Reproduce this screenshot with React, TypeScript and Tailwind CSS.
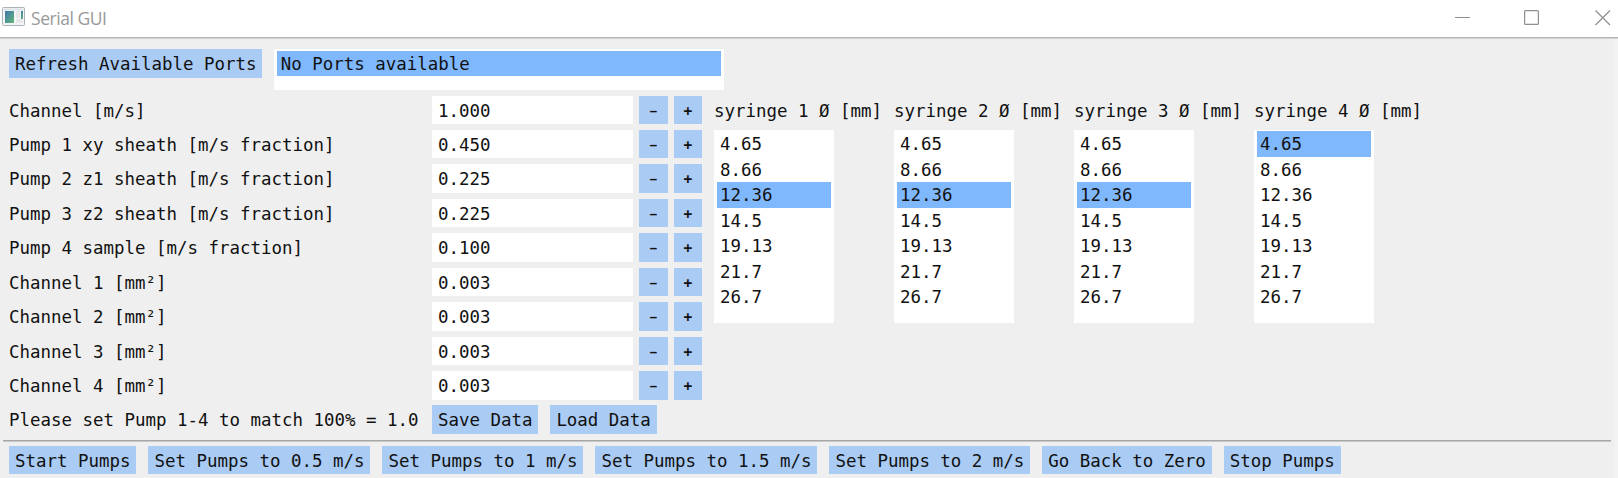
import React from "react";

const params: [string, string][] = [
  ["Channel [m/s]", "1.000"],
  ["Pump 1 xy sheath [m/s fraction]", "0.450"],
  ["Pump 2 z1 sheath [m/s fraction]", "0.225"],
  ["Pump 3 z2 sheath [m/s fraction]", "0.225"],
  ["Pump 4 sample [m/s fraction]", "0.100"],
  ["Channel 1 [mm²]", "0.003"],
  ["Channel 2 [mm²]", "0.003"],
  ["Channel 3 [mm²]", "0.003"],
  ["Channel 4 [mm²]", "0.003"],
];

const diameters = ["4.65", "8.66", "12.36", "14.5", "19.13", "21.7", "26.7"];
const selected = ["12.36", "12.36", "12.36", "4.65"];

const actions = [
  "Start Pumps",
  "Set Pumps to 0.5 m/s",
  "Set Pumps to 1 m/s",
  "Set Pumps to 1.5 m/s",
  "Set Pumps to 2 m/s",
  "Go Back to Zero",
  "Stop Pumps",
];

function Button({ children }: { children: React.ReactNode }) {
  return (
    <button className="flex h-[28.5px] shrink-0 items-start bg-[#aacbf4] px-[6px] leading-[31px] whitespace-pre">
      {children}
    </button>
  );
}

function Step({ children }: { children: string }) {
  return (
    <button className="flex h-[28.5px] w-[28.5px] shrink-0 items-start justify-center bg-[#aacbf4]">
      <span
        className={
          children === "-"
            ? "scale-x-150 text-[17.44px] leading-[28px]"
            : "text-[14.5px] leading-[30px] font-bold"
        }
      >
        {children}
      </span>
    </button>
  );
}

function TitleBar() {
  return (
    <header className="flex h-[37px] shrink-0 items-start bg-white">
      <svg className="mt-[7px] ml-[2px] shrink-0" width="23" height="19" viewBox="0 0 23 19">
        <defs>
          <linearGradient id="pane" x1="0" y1="0" x2="1" y2="1">
            <stop offset="0" stopColor="#3f76ad" />
            <stop offset="1" stopColor="#62b877" />
          </linearGradient>
        </defs>
        <rect x="0.5" y="0.5" width="22" height="18" rx="1" fill="#f4f6f7" stroke="#aab2b8" />
        <rect x="1.5" y="1.5" width="20" height="2" fill="#dfe4e8" />
        <rect x="3" y="4" width="9" height="12" fill="url(#pane)" />
        <rect x="14" y="4" width="4" height="7" fill="#e6e8ea" />
        <rect x="19" y="4" width="2" height="8" fill="url(#pane)" />
        <rect x="14" y="12" width="7" height="4" fill="#e6e8ea" />
      </svg>
      <span className="ml-[6px] font-['Open_Sans',sans-serif] text-[17.5px] leading-[37px] tracking-[-0.45px] text-[#999999]">
        Serial GUI
      </span>
      <svg className="mt-[9px] ml-auto mr-[6px] shrink-0" width="157" height="17" viewBox="0 0 157 17" fill="none" stroke="#8f8f8f">
        <path d="M0 8.5H15" />
        <rect x="69.6" y="1.6" width="13.8" height="13.8" rx="1" strokeWidth="1.2" />
        <path d="M140.5 1.5L155 16M155 1.5L140.5 16" strokeWidth="1.2" />
      </svg>
    </header>
  );
}

export default function App() {
  return (
    <div className="flex h-[478px] w-[1618px] flex-col overflow-hidden bg-[#efefef] font-['DejaVu_Sans_Mono',monospace] text-[17.44px] text-[#111111]">
      <TitleBar />
      <div className="h-[2px] shrink-0 border-t border-[#b4b4b4] bg-[#d2d2d2]" />
      <main className="flex h-[439px] shrink-0 flex-col border-r-4 border-[#f3f3f3] pt-[10px] pl-[9px]">
        <div className="flex h-[46.5px] shrink-0 items-start gap-[11.9px]">
          <Button>Refresh Available Ports</Button>
          <div className="h-[40.5px] w-[450px] bg-white px-[3px] pt-[1.5px]">
            <div className="h-[25.5px] bg-[#80b8fd] pl-[3.5px] leading-[26px]">No Ports available</div>
          </div>
        </div>
        <div className="flex shrink-0 gap-[12px]">
          <div className="flex w-[693px] flex-col">
            {params.map(([label, value]) => (
              <div key={label} className="flex h-[34.45px] items-start gap-[6px]">
                <span className="w-[417px] leading-[31px] whitespace-pre">{label}</span>
                <div className="h-[28.5px] w-[201px] bg-white pl-[6px] leading-[31px]">{value}</div>
                <Step>-</Step>
                <Step>+</Step>
              </div>
            ))}
            <div className="flex h-[34.4px] items-start">
              <span className="w-[423px] leading-[31px] whitespace-pre">
                Please set Pump 1-4 to match 100% = 1.0
              </span>
              <div className="flex gap-[11.9px]">
                <Button>Save Data</Button>
                <Button>Load Data</Button>
              </div>
            </div>
          </div>
          <div className="flex">
            {selected.map((current, i) => (
              <div key={i} className="w-[180px]">
                <div className="h-[34.5px] leading-[31px] whitespace-pre">{`syringe ${i + 1} Ø [mm]`}</div>
                <div className="h-[193px] w-[120px] bg-white px-[3px] pt-[1.2px]">
                  {diameters.map((d) => (
                    <div
                      key={d}
                      className={
                        d === current
                          ? "h-[25.5px] bg-[#80b8fd] pl-[3px] leading-[27.5px]"
                          : "h-[25.5px] pl-[3px] leading-[27.5px]"
                      }
                    >
                      {d}
                    </div>
                  ))}
                </div>
              </div>
            ))}
          </div>
        </div>
        <div className="mt-[0.5px] -ml-[6px] h-[2px] w-[1608px] shrink-0 border-t border-[#a6a6a6] bg-[#c8c8c8]" />
        <div className="mt-[3.6px] flex gap-[12px]">
          {actions.map((a) => (
            <Button key={a}>{a}</Button>
          ))}
        </div>
      </main>
    </div>
  );
}
